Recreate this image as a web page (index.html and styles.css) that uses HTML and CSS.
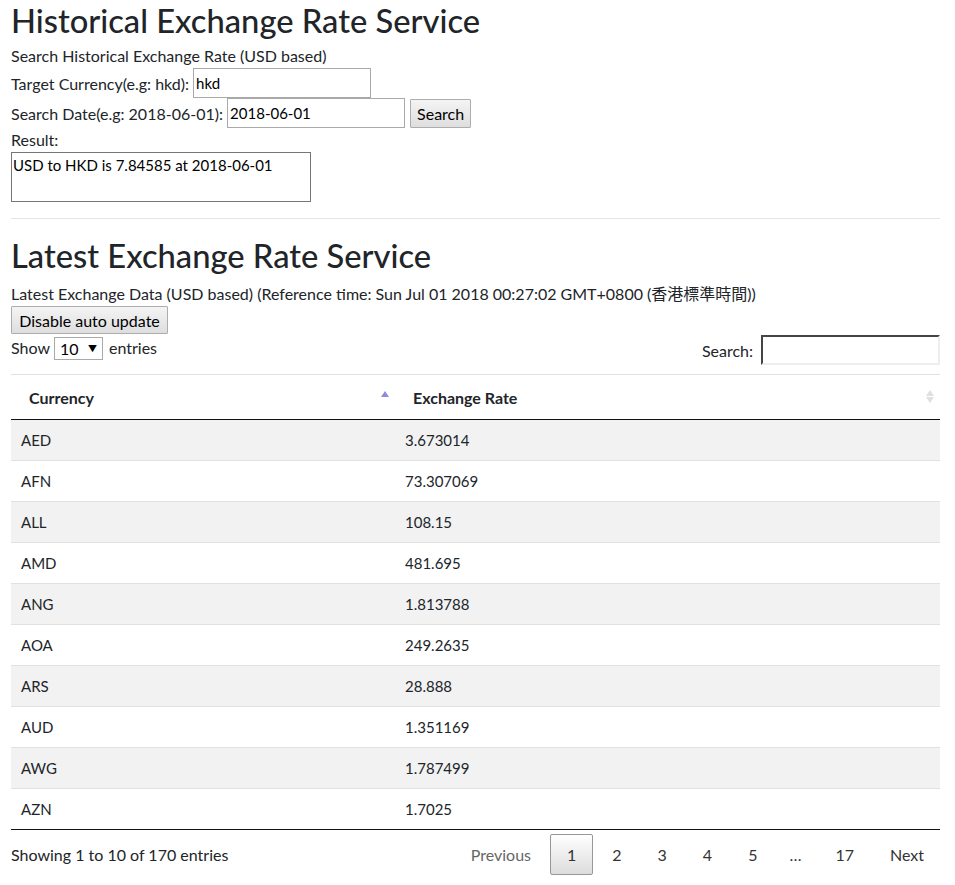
FILE: index.html
```html
<!DOCTYPE html>
<html>
<head>
<meta charset="utf-8">
<link rel="stylesheet" href="styles.css">
</head>
<body>
<div class="page">
  <h1 class="title">Historical Exchange Rate Service</h1>
  <div class="line">Search Historical Exchange Rate (USD based)</div>
  <div class="row">Target Currency(e.g: hkd):&nbsp;<input class="field" type="text" value="hkd"></div>
  <div class="row">Search Date(e.g: 2018-06-01):&nbsp;<input class="field" type="text" value="2018-06-01"><button class="btn search-btn">Search</button></div>
  <div class="line">Result:</div>
  <div class="result">USD to HKD is 7.84585 at 2018-06-01</div>
  <hr class="sep">
  <h2 class="title title2">Latest Exchange Rate Service</h2>
  <div class="line">Latest Exchange Data (USD based) (Reference time: Sun Jul 01 2018 00:27:02 GMT+0800 (香港標準時間))</div>
  <button class="btn auto-btn">Disable auto update</button>
  <div class="controls">
    <div class="length">Show <span class="select"><span>10</span><span class="arrow">▼</span></span> entries</div>
    <div class="filter">Search: <input class="search-input" type="text"></div>
  </div>
  <table class="grid">
    <colgroup><col class="c1"><col class="c2"></colgroup>
    <thead>
      <tr>
        <th>Currency<span class="sort-asc"></span></th>
        <th>Exchange Rate<span class="sort-both"><span class="up"></span><span class="down"></span></span></th>
      </tr>
    </thead>
    <tbody>
      <tr class="odd"><td>AED</td><td>3.673014</td></tr>
      <tr><td>AFN</td><td>73.307069</td></tr>
      <tr class="odd"><td>ALL</td><td>108.15</td></tr>
      <tr><td>AMD</td><td>481.695</td></tr>
      <tr class="odd"><td>ANG</td><td>1.813788</td></tr>
      <tr><td>AOA</td><td>249.2635</td></tr>
      <tr class="odd"><td>ARS</td><td>28.888</td></tr>
      <tr><td>AUD</td><td>1.351169</td></tr>
      <tr class="odd"><td>AWG</td><td>1.787499</td></tr>
      <tr><td>AZN</td><td>1.7025</td></tr>
    </tbody>
  </table>
  <div class="footer">
    <div class="info">Showing 1 to 10 of 170 entries</div>
    <div class="pager">
      <span class="pg disabled">Previous</span>
      <span class="pg current">1</span>
      <span class="pg">2</span>
      <span class="pg">3</span>
      <span class="pg">4</span>
      <span class="pg">5</span>
      <span class="ellipsis">…</span>
      <span class="pg">17</span>
      <span class="pg">Next</span>
    </div>
  </div>
</div>
</body>
</html>
```
FILE: styles.css
```css
* { box-sizing: border-box; }
body {
  margin: 0;
  font-family: "Lato", "Noto Sans CJK TC", sans-serif;
  font-size: 16px;
  color: #212529;
  background: #fff;
}
.page { padding: 0 15px 0 11px; }
.title {
  margin: 0;
  height: 44px;
  line-height: 42px;
  font-size: 32.7px;
  font-weight: 500;
}
.title2 { margin-top: 16px; height: 47px; }
.line { height: 24px; line-height: 24px; }
.row { height: 30px; display: flex; align-items: center; }
.field {
  height: 30px;
  width: 178px;
  border: 1px solid #a9a9a9;
  font: inherit;
  font-size: 15px;
  padding: 0 2px;
  color: #000;
}
.btn {
  font: inherit;
  color: #000;
  border: 1px solid #adadad;
  background: linear-gradient(#f4f4f4, #dedede);
  border-radius: 1px;
  padding: 0 6px;
}
.search-btn { height: 29px; margin-left: 5px; }
.result {
  width: 300px;
  height: 50px;
  border: 1px solid #767676;
  padding: 2px 1px;
  line-height: 20px;
  font-size: 15px;
  color: #000;
}
.sep {
  margin: 16px 0 0;
  border: 0;
  border-top: 1px solid #e5e5e5;
}
.auto-btn { height: 28px; width: 157px; display: block; }
.controls {
  display: flex;
  justify-content: space-between;
  align-items: flex-start;
  height: 30px;
  margin-top: 1px;
}
.length { display: flex; align-items: center; height: 25px; }
.select {
  display: inline-flex;
  align-items: center;
  justify-content: space-between;
  width: 49px;
  height: 23px;
  margin: 2px 6px 0 4px;
  border: 1px solid #a9a9a9;
  padding: 0 5px 0 5px;
  color: #000;
}
.arrow { font-size: 9px; }
.filter { display: flex; align-items: center; height: 30px; }
.search-input {
  width: 179px;
  height: 30px;
  margin-left: 8px;
  border: 2px inset #eee;
  border-top-color: #999;
  border-left-color: #999;
}
.grid {
  width: 100%;
  table-layout: fixed;
  border-collapse: collapse;
  margin-top: 9px;
  border-bottom: 1px solid #111;
}
.c1 { width: 384px; }
.grid th {
  text-align: left;
  font-weight: 700;
  height: 45px;
  padding: 0 18px;
  border-top: 1px solid #dee2e6;
  border-bottom: 1px solid #111;
  position: relative;
}
.grid td {
  height: 41px;
  padding: 0 10px;
  font-size: 15px;
  border-top: 1px solid #dee2e6;
}
.grid tbody tr:first-child td { border-top: 0; }
.grid tr.odd td { background: #f2f2f2; }
.sort-asc {
  position: absolute;
  right: 6px;
  top: 16px;
  width: 0;
  height: 0;
  border-left: 4px solid transparent;
  border-right: 4px solid transparent;
  border-bottom: 6px solid #8c8cdc;
}
.sort-both {
  position: absolute;
  right: 6px;
  top: 15px;
  display: flex;
  flex-direction: column;
  gap: 1px;
}
.sort-both .up, .sort-both .down {
  width: 0; height: 0;
  border-left: 4px solid transparent;
  border-right: 4px solid transparent;
}
.sort-both .up { border-bottom: 6px solid #e0e0e0; }
.sort-both .down { border-top: 6px solid #e0e0e0; }
.footer {
  display: flex;
  justify-content: space-between;
  align-items: center;
  height: 47px;
  padding-top: 2px;
}
.pager { display: flex; align-items: center; margin-right: -1px; }
.pg {
  display: inline-flex;
  align-items: center;
  justify-content: center;
  height: 41px;
  padding: 0 16px;
  margin-left: 2px;
  border: 1px solid transparent;
  border-radius: 2px;
  color: #333;
}
.pg.disabled { color: #666; }
.pg.current {
  border-color: #979797;
  background: linear-gradient(#fff, #dcdcdc);
}
.ellipsis { padding: 0 15px; color: #333; }
```
